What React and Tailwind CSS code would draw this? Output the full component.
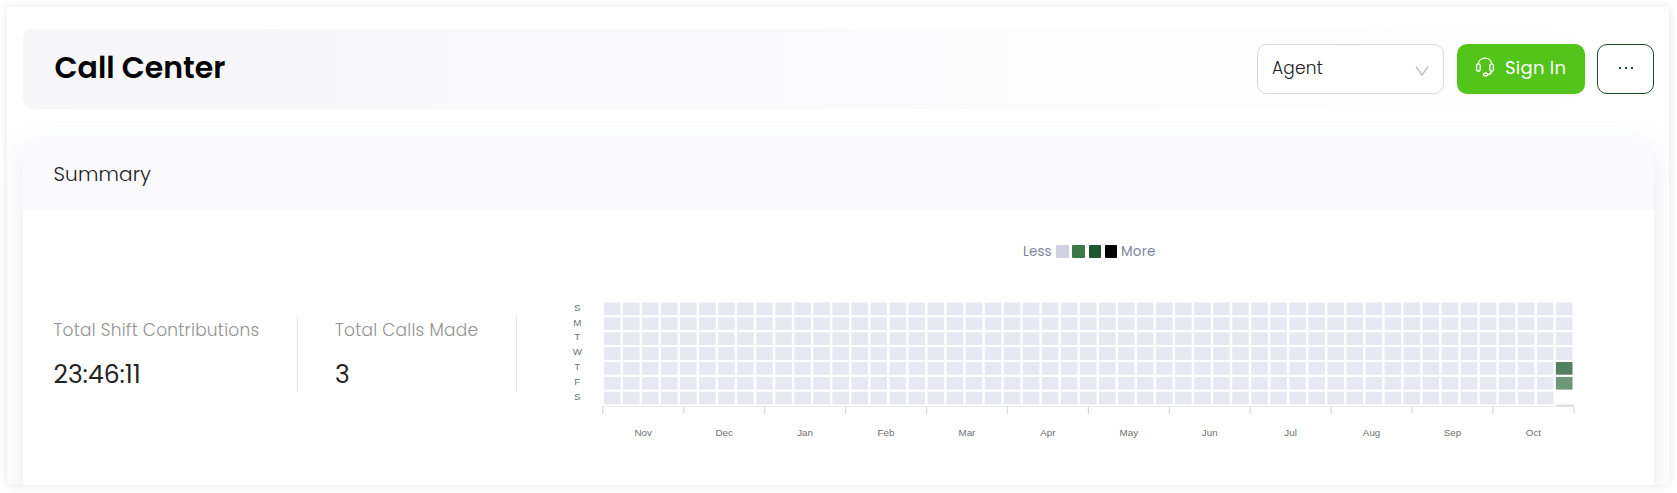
import React from "react";

const MONTHS = ["Nov", "Dec", "Jan", "Feb", "Mar", "Apr", "May", "Jun", "Jul", "Aug", "Sep", "Oct"];
const DAYS = ["S", "M", "T", "W", "T", "F", "S"];
const WEEKS = 51;

function cellColor(week, day) {
  if (week === WEEKS - 1) {
    if (day === 4) return "#54805f";
    if (day === 5) return "#6d9877";
    if (day === 6) return null;
  }
  return "#e8e8f2";
}

function HeadsetIcon() {
  return (
    <svg width="20" height="20" viewBox="0 0 20 20" fill="none" stroke="white" strokeWidth="1.35" className="shrink-0">
      <path d="M3.2 7.2C3.5 3.4 6.4 1.1 10 1.1s6.500 2.300 6.800 6.100" />
      <rect x="1.600" y="6.900" width="3.600" height="7.300" rx="1.800" />
      <rect x="14.800" y="6.900" width="3.600" height="7.300" rx="1.800" />
      <path d="M16.600 14.200c-.3 2.200-1.600 3.300-3.800 3.500" />
      <rect x="8.400" y="16.200" width="4.300" height="2.500" rx="1.250" />
    </svg>
  );
}

function Heatmap() {
  const cells = [];
  for (let w = 0; w < WEEKS; w++) {
    for (let d = 0; d < 7; d++) {
      const fill = cellColor(w, d);
      if (fill) {
        cells.push(
          <rect key={w + "-" + d} x={33.9 + w * 19.04} y={12.5 + d * 14.88} width="16.6" height="12.7" fill={fill} />
        );
      }
    }
  }
  return (
    <svg width="1020" height="160" viewBox="0 0 1020 160" className="block" fontFamily="'Liberation Sans', Arial, sans-serif" fontSize="9.800">
      {cells}
      <line x1="33" x2="1004" y1="116.5" y2="116.5" stroke="#ececec" />
      <rect x="986" y="114.500" width="18" height="2.500" fill="#e0e0e0" />
      {Array.from({ length: 13 }, (_, i) => (
        <line key={i} x1={32.8 + i * 80.93} x2={32.8 + i * 80.93} y1="116.500" y2="124" stroke="#d9d9d9" strokeWidth="1.200" />
      ))}
      {DAYS.map((d, i) => (
        <text key={i} x="7.300" y={20.7 + i * 14.84} textAnchor="middle" fill="#6e7079">{d}</text>
      ))}
      {MONTHS.map((m, i) => (
        <text key={m} x={73.2 + i * 80.93} y="146.300" textAnchor="middle" fill="#6e7070">{m}</text>
      ))}
    </svg>
  );
}

function Stat({ label, value, className }) {
  return (
    <div className={"flex h-[75px] flex-col border-r border-[#e4e4ea] whitespace-nowrap " + className}>
      <div className="text-[17px] leading-[27px] font-light tracking-[0.24px] text-[#929292]">{label}</div>
      <div className="mt-[12px] text-[25px] leading-[38px] font-normal text-[#242424]">{value}</div>
    </div>
  );
}

export default function App() {
  return (
    <div className="h-[493px] w-[1677px] overflow-hidden bg-white px-[7px] pt-[7px] pb-[8px] font-[Poppins,Inter,sans-serif]">
      <div className="h-[478px] w-[1662px] shadow-[0_0_9px_rgba(0,0,0,0.11)]">
        <div className="h-full overflow-hidden bg-white px-4 pt-[22px]">
          <header className="flex h-20 w-[1631px] items-center rounded-[10px] bg-linear-to-r from-[#f6f6f9] to-white pl-[31.5px]">
            <h1 className="-mt-[2px] text-[30px] leading-10 font-semibold text-black">Call Center</h1>
            <div className="ml-auto flex items-center">
              <div className="flex h-[50px] w-[187px] items-center justify-between rounded-[10px] border border-[#d9d9d9] bg-white pr-[14px] pl-[14px]">
                <span className="text-[17px] font-light tracking-[0.2px] text-[#202020]">Agent</span>
                <svg width="14" height="10" viewBox="0 0 14 10" fill="none" stroke="#b8b8b8" strokeWidth="1.300" className="mt-[3px]"><path d="M1 .6 7 9 13 .6" /></svg>
              </div>
              <button className="ml-[13px] flex h-[50px] w-32 items-center rounded-[10px] bg-[#52c41a] pl-[18px] text-white shadow-[0_2px_0_rgba(0,0,0,0.02)]">
                <span className="-mt-[5px]"><HeadsetIcon /></span>
                <span className="-mt-[3px] ml-[10px] text-[18px] font-normal tracking-[0.25px] whitespace-nowrap">Sign In</span>
              </button>
              <button className="ml-3 flex h-[50px] w-[57px] items-center justify-center gap-[4px] rounded-[10px] border border-[#1b4d2b] bg-white pb-[3px]">
                <span className="size-[2px] bg-[#1b4d2b]" />
                <span className="size-[2px] bg-[#1b4d2b]" />
                <span className="size-[2px] bg-[#1b4d2b]" />
              </button>
            </div>
          </header>

          <section className="mt-7 h-[420px] w-[1631px] rounded-[10px] bg-white shadow-[0_12px_32px_rgba(80,95,160,0.12)]">
            <div className="flex h-[73px] items-center rounded-t-[10px] bg-[#fafafc] pl-[30.5px]">
              <h2 className="text-[20px] font-light tracking-[0.15px] text-[#202020]">Summary</h2>
            </div>
            <div className="flex">
              <div className="flex pt-[107px] pl-[30px]">
                <Stat label="Total Shift Contributions" value="23:46:11" className="w-[245px] pl-[0.5px]" />
                <Stat label="Total Calls Made" value="3" className="w-[219px] pl-[37px]" />
              </div>
              <div className="ml-[53px] w-[1020px]">
                <div className="flex h-20 items-center pt-[3px] pl-[453px] text-[13.5px] text-[#8084a0]">
                  <span className="w-[32px] pt-[2px] tracking-[0.1px]">Less</span>
                  <span className="ml-[1px] size-[13px] rounded-[1px] bg-[#d0d1e3]" />
                  <span className="ml-[3px] size-[13px] rounded-[1px] bg-[#3e7748]" />
                  <span className="ml-[4px] h-[13px] w-[12px] rounded-[1px] bg-[#1d572d]" />
                  <span className="ml-[4px] h-[13px] w-[12px] rounded-[1px] bg-black" />
                  <span className="ml-[4px] pt-[2px] tracking-[0.2px]">More</span>
                </div>
                <Heatmap />
              </div>
            </div>
          </section>
        </div>
      </div>
    </div>
  );
}
